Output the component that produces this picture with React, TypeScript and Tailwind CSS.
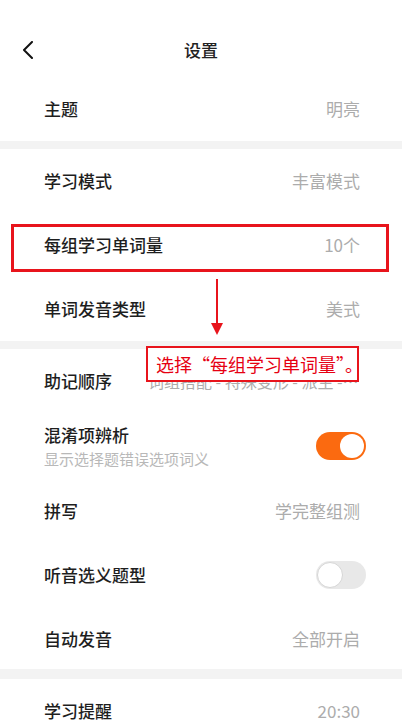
import type { ReactNode } from 'react'

const font = { fontFamily: '"Noto Sans CJK SC", "Noto Sans", sans-serif' }

function Toggle({ on }: { on: boolean }) {
  return on ? (
    <div className="w-[50px] h-[28px] rounded-full bg-[#fb6a10] flex items-center justify-end p-[2px]">
      <div className="w-[24px] h-[24px] rounded-full bg-white" />
    </div>
  ) : (
    <div className="w-[50px] h-[28px] rounded-full bg-[#e8e8e8] flex items-center justify-start p-[1px]">
      <div className="w-[26px] h-[26px] rounded-full bg-white border border-[#d6d6d6]" />
    </div>
  )
}

function Row({ label, value, sub, right, h = 'h-[64px]' }: { label: string; value?: ReactNode; sub?: string; right?: ReactNode; h?: string }) {
  return (
    <div className={`${h} flex items-center justify-between pl-[44px] pr-[42px]`}>
      <div className="flex flex-col">
        <span className="text-[17px] font-medium text-[#1e1e1e] leading-[24px]">{label}</span>
        {sub && <span className="text-[15px] text-[#b8b8b8] leading-[20px] mt-[2px]">{sub}</span>}
      </div>
      {right ?? <span className="text-[17px] text-[#acacac] leading-[24px]">{value}</span>}
    </div>
  )
}

const Sep = () => <div className="h-[8px] bg-[#f3f3f3]" />

export default function App() {
  return (
    <div className="relative w-[402px] h-[720px] overflow-hidden bg-white" style={font}>
      <div className="h-[77px] pt-[26px]">
        <div className="relative h-[48px] flex items-center justify-center">
          <svg className="absolute left-[22px] top-[15px]" width="12" height="18" viewBox="0 0 12 18" fill="none">
            <polyline points="10,1 2,9 10,17" stroke="#111" strokeWidth="2" strokeLinecap="round" strokeLinejoin="round" />
          </svg>
          <span className="text-[17px] font-medium text-[#222]">设置</span>
        </div>
      </div>

      <Row label="主题" value="明亮" />
      <Sep />
      <Row label="学习模式" value="丰富模式" />
      <Row label="每组学习单词量" value="10个" />
      <Row label="单词发音类型" value="美式" />
      <Sep />
      <Row
        label="助记顺序"
        right={<span className="w-[212px] truncate text-right text-[16px] text-[#acacac] leading-[24px]">词组搭配 - 特殊变形 - 派生 - 联想</span>}
      />
      <div className="-mr-[6px]">
        <Row label="混淆项辨析" sub="显示选择题错误选项词义" h="h-[66px]" right={<Toggle on />} />
      </div>
      <Row label="拼写" value="学完整组测" />
      <div className="-mr-[6px]">
        <Row label="听音选义题型" right={<Toggle on={false} />} />
      </div>
      <Row label="自动发音" value="全部开启" />
      <div className="h-[10px] bg-[#f3f3f3] -mt-[2px]" />
      <Row label="学习提醒" value="20:30" />

      {/* annotations */}
      <div className="absolute left-[11px] top-[224px] w-[378px] h-[48px] border-[3px] border-[#e8141c]" />
      <div className="absolute left-[216px] top-[279px] w-[2px] h-[46px] bg-[#e8141c]" />
      <svg className="absolute left-[211px] top-[323px]" width="12" height="12" viewBox="0 0 12 12">
        <polygon points="0,0 12,0 6,12" fill="#e8141c" />
      </svg>
      <div className="absolute left-[146px] top-[346px] w-[213px] h-[36px] bg-white border-2 border-[#e8141c] flex items-center pl-[8px]">
        <span className="text-[18px] text-[#e60012] leading-none whitespace-nowrap">选择“每组学习单词量”。</span>
      </div>
    </div>
  )
}
